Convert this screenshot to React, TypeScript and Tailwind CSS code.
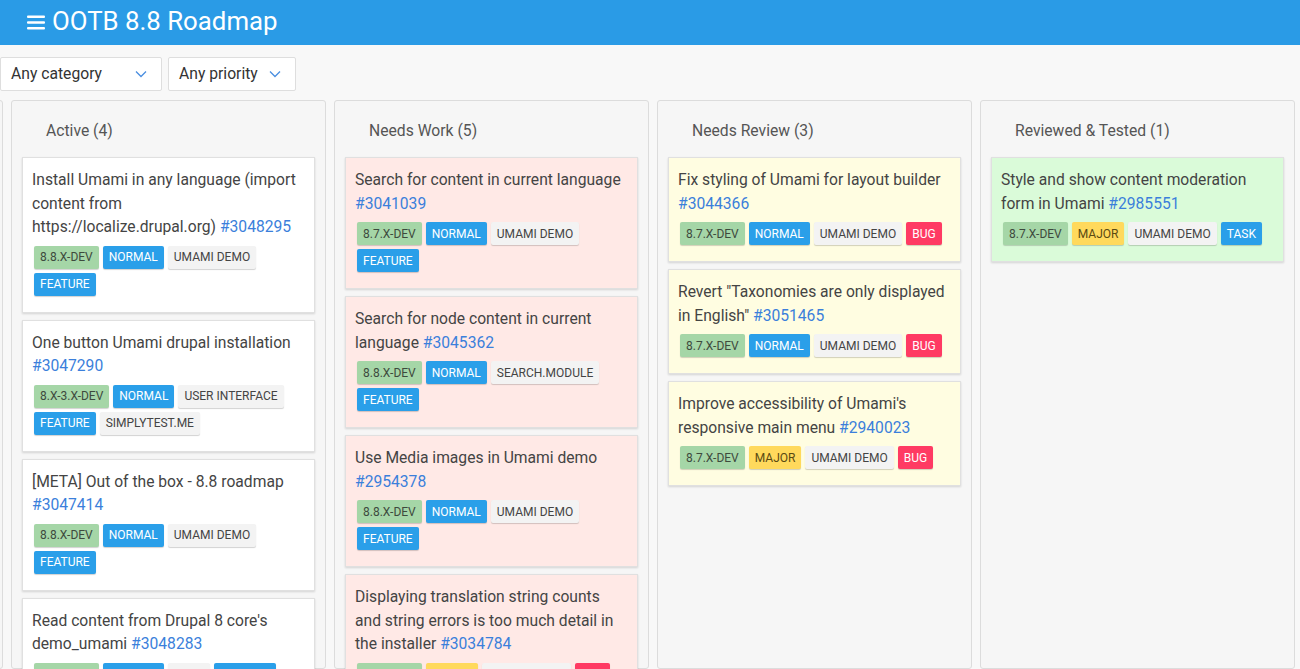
import React from "react";

type TagKind = "green" | "blue" | "gray" | "red" | "yellow";

interface Tag {
  label: string;
  kind: TagKind;
}

interface Issue {
  title: string;
  nid: string;
  tags: Tag[];
}

interface Column {
  name: string;
  card: string;
  issues: Issue[];
}

const tagStyles: Record<TagKind, string> = {
  green: "bg-[#a5d6a7] text-[#3d4a3d]",
  blue: "bg-[#2a9fe9] text-white",
  gray: "bg-[#f3f3f3] text-[#444]",
  red: "bg-[#ff3a63] text-white",
  yellow: "bg-[#ffd95c] text-[#5a4a12]",
};

const g = (label: string): Tag => ({ label, kind: "green" });
const b = (label: string): Tag => ({ label, kind: "blue" });
const gr = (label: string): Tag => ({ label, kind: "gray" });
const r = (label: string): Tag => ({ label, kind: "red" });
const y = (label: string): Tag => ({ label, kind: "yellow" });

const columns: Column[] = [
  {
    name: "Active (4)",
    card: "bg-white",
    issues: [
      {
        title:
          "Install Umami in any language (import content from https://localize.drupal.org)",
        nid: "3048295",
        tags: [g("8.8.x-dev"), b("Normal"), gr("Umami demo"), b("Feature")],
      },
      {
        title: "One button Umami drupal installation",
        nid: "3047290",
        tags: [
          g("8.x-3.x-dev"),
          b("Normal"),
          gr("User interface"),
          b("Feature"),
          gr("simplytest.me"),
        ],
      },
      {
        title: "[META] Out of the box - 8.8 roadmap",
        nid: "3047414",
        tags: [g("8.8.x-dev"), b("Normal"), gr("Umami demo"), b("Feature")],
      },
      {
        title: "Read content from Drupal 8 core's demo_umami",
        nid: "3048283",
        tags: [g("8.8.x-dev"), b("Normal"), gr("Core"), b("Feature")],
      },
    ],
  },
  {
    name: "Needs Work (5)",
    card: "bg-[#ffe9e6]",
    issues: [
      {
        title: "Search for content in current language",
        nid: "3041039",
        tags: [g("8.7.x-dev"), b("Normal"), gr("Umami demo"), b("Feature")],
      },
      {
        title: "Search for node content in current language",
        nid: "3045362",
        tags: [g("8.8.x-dev"), b("Normal"), gr("search.module"), b("Feature")],
      },
      {
        title: "Use Media images in Umami demo",
        nid: "2954378",
        tags: [g("8.8.x-dev"), b("Normal"), gr("Umami demo"), b("Feature")],
      },
      {
        title:
          "Displaying translation string counts and string errors is too much detail in the installer",
        nid: "3034784",
        tags: [g("8.8.x-dev"), y("Major"), gr("Umami demo"), r("Bug")],
      },
    ],
  },
  {
    name: "Needs Review (3)",
    card: "bg-[#fffde1]",
    issues: [
      {
        title: "Fix styling of Umami for layout builder",
        nid: "3044366",
        tags: [g("8.7.x-dev"), b("Normal"), gr("Umami demo"), r("Bug")],
      },
      {
        title: 'Revert "Taxonomies are only displayed in English"',
        nid: "3051465",
        tags: [g("8.7.x-dev"), b("Normal"), gr("Umami demo"), r("Bug")],
      },
      {
        title: "Improve accessibility of Umami's responsive main menu",
        nid: "2940023",
        tags: [g("8.7.x-dev"), y("Major"), gr("Umami demo"), r("Bug")],
      },
    ],
  },
  {
    name: "Reviewed & Tested (1)",
    card: "bg-[#dafbd9]",
    issues: [
      {
        title: "Style and show content moderation form in Umami",
        nid: "2985551",
        tags: [g("8.7.x-dev"), y("Major"), gr("Umami demo"), b("Task")],
      },
    ],
  },
];

function Chevron() {
  return (
    <svg width="12" height="8" viewBox="0 0 12 8" fill="none">
      <path d="M1 1.5l5 5 5-5" stroke="#4a8ee0" strokeWidth="1.3" />
    </svg>
  );
}

function Select({ label, width }: { label: string; width: string }) {
  return (
    <div
      className={`${width} h-[34px] bg-white border border-[#dedede] rounded-[2px] flex items-center justify-between pl-[10px] pr-[14px] text-[15.7px] text-[#333]`}
    >
      <span>{label}</span>
      <Chevron />
    </div>
  );
}

function IssueCard({ issue, bg }: { issue: Issue; bg: string }) {
  return (
    <div
      className={`${bg} border border-[#e0e0e0] shadow-[0_1px_2px_rgba(0,0,0,0.14)] px-[9px] pt-[10px] pb-[16px]`}
    >
      <div className="text-[15.65px] leading-[23.5px] text-[#444]">
        {issue.title}{" "}
        <a className="text-[#3b7fdb]">#{issue.nid}</a>
      </div>
      <div className="flex flex-wrap mt-[7px] -mb-[4px] pl-[2px]">
        {issue.tags.map((t, i) => (
          <span
            key={i}
            className={`${tagStyles[t.kind]} h-[23px] px-[6px] mr-[4px] mb-[4px] rounded-[2px] text-[12px] uppercase flex items-center shadow-[0_1px_1px_rgba(0,0,0,0.18)]`}
          >
            {t.label}
          </span>
        ))}
      </div>
    </div>
  );
}

function BoardColumn({ col }: { col: Column }) {
  return (
    <div className="w-[315px] shrink-0 bg-[#f6f6f6] border border-[#dcdcdc] rounded-[3px] px-[10px] self-stretch">
      <div className="h-[56px] flex items-center pl-[24px] pt-[4px] text-[15.7px] text-[#555]">
        {col.name}
      </div>
      <div className="flex flex-col gap-[7px]">
        {col.issues.map((issue) => (
          <IssueCard key={issue.nid} issue={issue} bg={col.card} />
        ))}
      </div>
    </div>
  );
}

export default function App() {
  return (
    <div
      className="w-[1300px] h-[669px] overflow-hidden bg-[#f8f8f8] flex flex-col"
      style={{ fontFamily: "Roboto, 'Liberation Sans', sans-serif" }}
    >
      <header className="h-[45px] bg-[#2a9be6] flex items-center pl-[27px] shrink-0">
        <svg width="18" height="15" viewBox="0 0 18 15" fill="white">
          <rect x="0" y="0.5" width="18" height="2.6" rx="1" />
          <rect x="0" y="6.2" width="18" height="2.6" rx="1" />
          <rect x="0" y="11.9" width="18" height="2.6" rx="1" />
        </svg>
        <h1 className="ml-[7px] text-white text-[25.8px] leading-none -mt-[2px]">
          OOTB 8.8 Roadmap
        </h1>
      </header>
      <div className="flex gap-[6px] mt-[12px] shrink-0">
        <Select label="Any category" width="w-[162px]" />
        <Select label="Any priority" width="w-[128px]" />
      </div>
      <div className="flex gap-[8px] mt-[9px] flex-1 min-h-0 items-stretch">
        <div className="w-[315px] shrink-0 ml-[-312px] bg-[#f6f6f6] border border-[#dcdcdc] rounded-[3px]" />
        {columns.map((col) => (
          <BoardColumn key={col.name} col={col} />
        ))}
      </div>
    </div>
  );
}
